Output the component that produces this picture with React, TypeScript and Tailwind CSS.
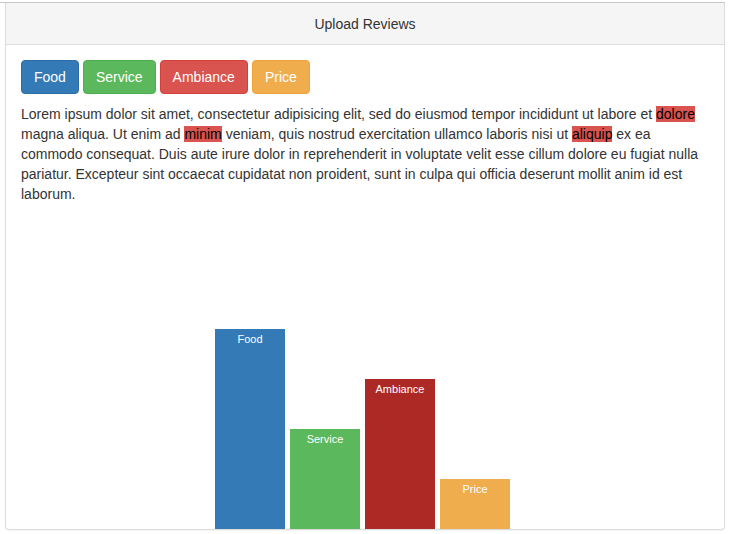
const categories = [
  { label: 'Food', btn: 'bg-[#337ab7] border-[#2e6da4]', bar: 'bg-[#337ab7]', height: 200 },
  { label: 'Service', btn: 'bg-[#5cb85c] border-[#4cae4c]', bar: 'bg-[#5cb85c]', height: 100 },
  { label: 'Ambiance', btn: 'bg-[#d9534f] border-[#d43f3a]', bar: 'bg-[#ac2925]', height: 150 },
  { label: 'Price', btn: 'bg-[#f0ad4e] border-[#eea236]', bar: 'bg-[#f0ad4e]', height: 50 },
];

function Mark({ children }: { children: React.ReactNode }) {
  return <span className="bg-[#d9534f] text-black">{children}</span>;
}

export default function App() {
  return (
    <div className="w-[730px] h-[534px] bg-white text-[14px] text-[#333] font-['Liberation_Sans',Arial,sans-serif] overflow-hidden">
      <div className="h-[3px] w-[725px] border-b border-[#c6c6c6]" />
      <div className="ml-[5px] w-[720px] h-[527px] flex flex-col border border-[#ddd] border-t-0 rounded-b-[4px] shadow-[0_1px_1px_rgba(0,0,0,0.05)] overflow-hidden">
        <div className="h-[42px] shrink-0 bg-[#f5f5f5] border-b border-[#ddd] flex items-center justify-center leading-5">
          Upload Reviews
        </div>
        <div className="flex-1 flex flex-col px-[15px] pt-[15px]">
          <div className="flex gap-[4px]">
            {categories.map((c) => (
              <button
                key={c.label}
                className={`h-[34px] px-[12px] border rounded-[4px] text-white text-[14px] leading-5 ${c.btn}`}
              >
                {c.label}
              </button>
            ))}
          </div>
          <p className="mt-[10px] leading-5">
            Lorem ipsum dolor sit amet, consectetur adipisicing elit, sed do eiusmod tempor incididunt ut labore et{' '}
            <Mark>dolore</Mark> magna aliqua. Ut enim ad <Mark>minim</Mark> veniam, quis nostrud exercitation ullamco
            laboris nisi ut <Mark>aliquip</Mark> ex ea commodo consequat. Duis aute irure dolor in reprehenderit in
            voluptate velit esse cillum dolore eu fugiat nulla pariatur. Excepteur sint occaecat cupidatat non proident,
            sunt in culpa qui officia deserunt mollit anim id est laborum.
          </p>
          <div className="flex-1 flex items-end gap-[5px] ml-[194px]">
            {categories.map((c) => (
              <div
                key={c.label}
                className={`w-[70px] pt-[3px] text-center text-white text-[11px] leading-[14px] ${c.bar}`}
                style={{ height: c.height }}
              >
                {c.label}
              </div>
            ))}
          </div>
        </div>
      </div>
    </div>
  );
}
